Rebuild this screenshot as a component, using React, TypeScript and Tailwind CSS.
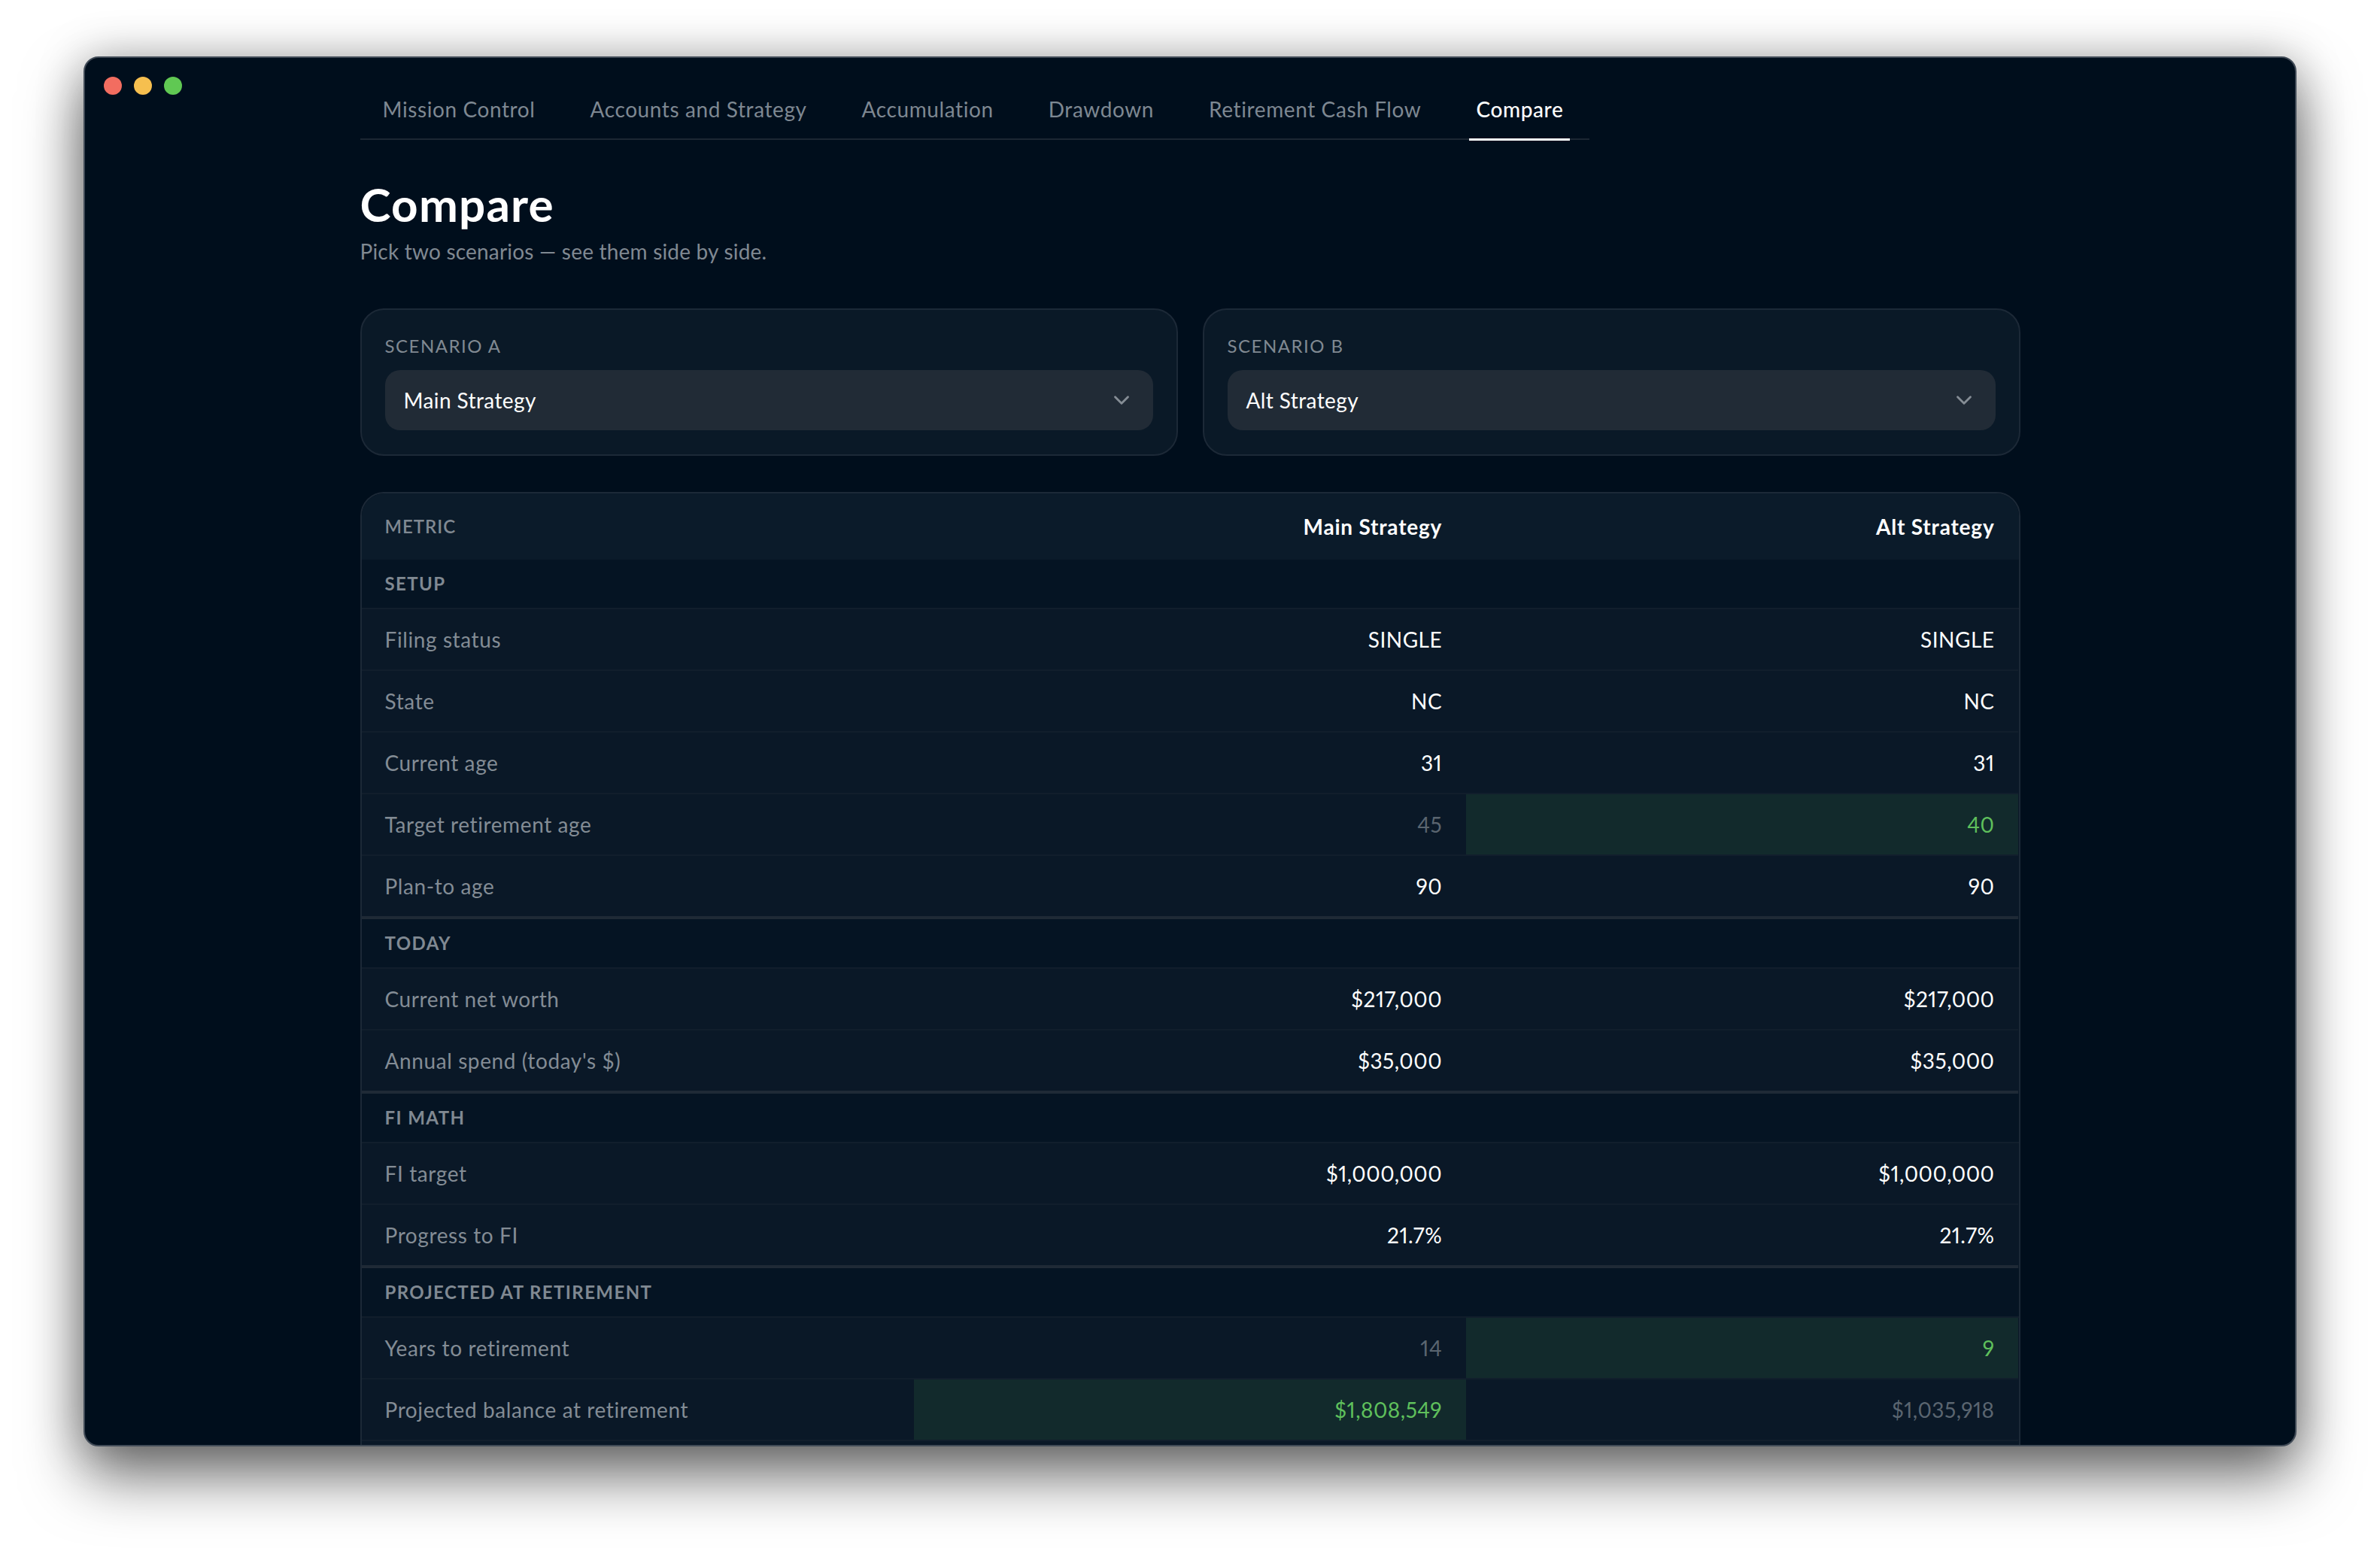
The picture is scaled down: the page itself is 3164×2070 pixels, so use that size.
import React from 'react';
import { ChevronDown } from 'lucide-react';

type Row = {
  label: string;
  a: string;
  b: string;
  win?: 'a' | 'b';
};

type Section = {
  title: string;
  rows: Row[];
};

const TABS = ['Mission Control', 'Accounts and Strategy', 'Accumulation', 'Drawdown', 'Retirement Cash Flow', 'Compare'];

const SECTIONS: Section[] = [
  {
    title: 'Setup',
    rows: [
      { label: 'Filing status', a: 'SINGLE', b: 'SINGLE' },
      { label: 'State', a: 'NC', b: 'NC' },
      { label: 'Current age', a: '31', b: '31' },
      { label: 'Target retirement age', a: '45', b: '40', win: 'b' },
      { label: 'Plan-to age', a: '90', b: '90' },
    ],
  },
  {
    title: 'Today',
    rows: [
      { label: 'Current net worth', a: '$217,000', b: '$217,000' },
      { label: "Annual spend (today's $)", a: '$35,000', b: '$35,000' },
    ],
  },
  {
    title: 'FI Math',
    rows: [
      { label: 'FI target', a: '$1,000,000', b: '$1,000,000' },
      { label: 'Progress to FI', a: '21.7%', b: '21.7%' },
    ],
  },
  {
    title: 'Projected at retirement',
    rows: [
      { label: 'Years to retirement', a: '14', b: '9', win: 'b' },
      { label: 'Projected balance at retirement', a: '$1,808,549', b: '$1,035,918', win: 'a' },
    ],
  },
];

function ScenarioCard({ label, value }: { label: string; value: string }) {
  return (
    <div className="rounded-[32px] border-2 border-[#1c2937] bg-[#0a1927] px-[31px] pt-[33px] pb-[32px]">
      <div className="text-[24px] leading-[30px] tracking-[1.5px] text-[#808992] uppercase">{label}</div>
      <div className="mt-[17px] flex h-[80px] items-center justify-between rounded-[20px] bg-[#212b36] pr-[25px] pl-[25px] text-[28px] tracking-[0.4px] text-white">
        <span>{value}</span>
        <ChevronDown size={34} strokeWidth={2} className="text-[#858d95]" />
      </div>
    </div>
  );
}

function ValueCell({ value, state, thick }: { value: string; state: 'win' | 'lose' | 'same'; thick: boolean }) {
  return (
    <div
      className={`flex items-center justify-end pr-[32px] text-[28px] tracking-[0.5px] proportional-nums ${thick ? 'border-b-4 border-[#1f2a36]' : 'border-b-2 border-[#111e2c]'} ${
        state === 'win' ? 'bg-[#122a2c] text-[#5fc05c]' : state === 'lose' ? 'text-[#5a6570]' : 'text-white'
      }`}
    >
      {value}
    </div>
  );
}

function CompareRow({ row, last }: { row: Row; last: boolean }) {
  const stateA = row.win === 'a' ? 'win' : row.win === 'b' ? 'lose' : 'same';
  const stateB = row.win === 'b' ? 'win' : row.win === 'a' ? 'lose' : 'same';
  return (
    <div className={`grid grid-cols-3 bg-[#0a1827] ${last ? 'h-[84px]' : 'h-[82px]'}`}>
      <div className={`flex items-center pl-[31px] text-[28px] tracking-[0.6px] text-[#838c95] ${last ? 'border-b-4 border-[#1f2a36]' : 'border-b-2 border-[#111e2c]'}`}>
        {row.label}
      </div>
      <ValueCell value={row.a} state={stateA} thick={last} />
      <ValueCell value={row.b} state={stateB} thick={last} />
    </div>
  );
}

export default function App() {
  return (
    <div className="h-[2070px] overflow-hidden bg-white px-[111px] pt-[75px] font-['Lato',sans-serif]">
      <div className="relative h-[1848px] overflow-hidden rounded-[20px] border-2 border-[#414b57] bg-[#000e1c] shadow-[0_40px_80px_rgba(0,0,0,0.55),0_0_60px_rgba(0,0,0,0.25)]">
        {/* Traffic lights */}
        <div className="absolute top-[25px] left-[25px] flex gap-[16px]">
          <div className="h-[24px] w-[24px] rounded-full bg-[#f26d60]" />
          <div className="h-[24px] w-[24px] rounded-full bg-[#f6bf4f]" />
          <div className="h-[24px] w-[24px] rounded-full bg-[#60c853]" />
        </div>

        <div className="mx-auto w-[2207px]">
          <nav className="flex h-[109px] w-[1634px] items-end gap-[55px] border-b-2 border-[#1c2733] pr-[24px] pl-[21px]">
            {TABS.map((tab) => (
              <div
                key={tab}
                className={`-mb-[3px] flex h-[70px] items-start px-[9px] pt-[10px] text-[28px] leading-[36px] tracking-[0.6px] ${
                  tab === 'Compare' ? 'border-b-[3px] border-white font-medium text-white' : 'text-[#7e8892]'
                }`}
              >
                {tab}
              </div>
            ))}
          </nav>

          <h1 className="mt-[49px] text-[62px] leading-[72px] font-bold tracking-[1.2px] text-white">Compare</h1>
          <p className="mt-[9px] text-[28px] leading-[36px] tracking-[0.2px] text-[#808992]">Pick two scenarios — see them side by side.</p>

          <div className="mt-[58px] grid grid-cols-2 gap-[33px]">
            <ScenarioCard label="Scenario A" value="Main Strategy" />
            <ScenarioCard label="Scenario B" value="Alt Strategy" />
          </div>

          <div className="mt-[48px] overflow-hidden rounded-t-[32px] border-2 border-[#1c2937]">
            <div className="grid h-[88px] grid-cols-3 bg-[#0b1b2a]">
              <div className="flex items-center pl-[31px] text-[24px] font-semibold tracking-[1px] text-[#808992] uppercase">Metric</div>
              <div className="flex items-center justify-end pr-[32px] text-[28px] font-bold tracking-[0.8px] text-white">Main Strategy</div>
              <div className="flex items-center justify-end pr-[32px] text-[28px] font-bold tracking-[0.8px] text-white">Alt Strategy</div>
            </div>
            {SECTIONS.map((section) => (
              <div key={section.title}>
                <div className="flex h-[66px] items-center border-b-2 border-[#111e2c] bg-[#051423] pl-[31px] text-[24px] font-bold tracking-[1.4px] text-[#808992] uppercase">
                  {section.title}
                </div>
                {section.rows.map((row, i) => (
                  <CompareRow key={row.label} row={row} last={i === section.rows.length - 1 && section.title !== 'Projected at retirement'} />
                ))}
              </div>
            ))}
            <div className="h-[40px] bg-[#0a1827]" />
          </div>
        </div>
      </div>
    </div>
  );
}
